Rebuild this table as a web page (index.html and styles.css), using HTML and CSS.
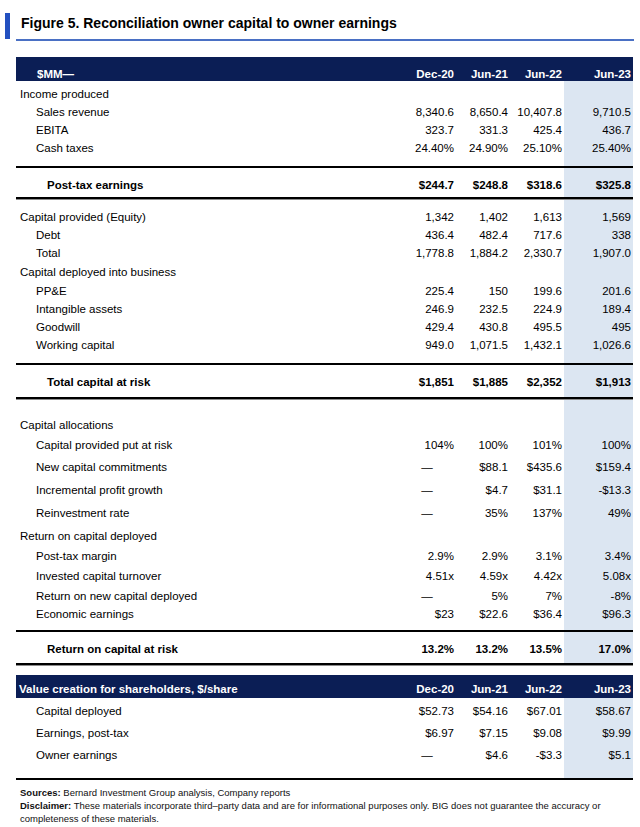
FILE: index.html
```html
<!DOCTYPE html>
<html lang="en">
<head>
<meta charset="utf-8">
<title>Figure 5. Reconciliation owner capital to owner earnings</title>
<link rel="stylesheet" href="styles.css">
</head>
<body>
<div class="page">
  <div class="title-row">
    <span class="title-mark"></span>
    <h1 class="title">Figure 5. Reconciliation owner capital to owner earnings</h1>
  </div>

  <div class="fig">
    <div class="row head">
      <div class="lbl hl">$MM—</div>
      <div class="v">Dec-20</div>
      <div class="v">Jun-21</div>
      <div class="v">Jun-22</div>
      <div class="v">Jun-23</div>
    </div>

    <div class="body body1">
      <div class="row h19"><div class="lbl">Income produced</div><div></div><div></div><div></div><div></div></div>
      <div class="row h18"><div class="lbl ind">Sales revenue</div><div class="v">8,340.6</div><div class="v">8,650.4</div><div class="v">10,407.8</div><div class="v">9,710.5</div></div>
      <div class="row h18"><div class="lbl ind">EBITA</div><div class="v">323.7</div><div class="v">331.3</div><div class="v">425.4</div><div class="v">436.7</div></div>
      <div class="row h18"><div class="lbl ind">Cash taxes</div><div class="v">24.40%</div><div class="v">24.90%</div><div class="v">25.10%</div><div class="v">25.40%</div></div>
      <div class="gap g9"></div>
      <div class="rule"></div>
      <div class="row tot tot-a"><div class="lbl sum">Post-tax earnings</div><div class="v">$244.7</div><div class="v">$248.8</div><div class="v">$318.6</div><div class="v">$325.8</div></div>
      <div class="rule dbl"></div>

      <div class="gap g8"></div>
      <div class="row h18"><div class="lbl">Capital provided (Equity)</div><div class="v">1,342</div><div class="v">1,402</div><div class="v">1,613</div><div class="v">1,569</div></div>
      <div class="row h18"><div class="lbl ind">Debt</div><div class="v">436.4</div><div class="v">482.4</div><div class="v">717.6</div><div class="v">338</div></div>
      <div class="row h18"><div class="lbl ind">Total</div><div class="v">1,778.8</div><div class="v">1,884.2</div><div class="v">2,330.7</div><div class="v">1,907.0</div></div>
      <div class="row h20"><div class="lbl">Capital deployed into business</div><div></div><div></div><div></div><div></div></div>
      <div class="row h18"><div class="lbl ind">PP&amp;E</div><div class="v">225.4</div><div class="v">150</div><div class="v">199.6</div><div class="v">201.6</div></div>
      <div class="row h18"><div class="lbl ind">Intangible assets</div><div class="v">246.9</div><div class="v">232.5</div><div class="v">224.9</div><div class="v">189.4</div></div>
      <div class="row h18"><div class="lbl ind">Goodwill</div><div class="v">429.4</div><div class="v">430.8</div><div class="v">495.5</div><div class="v">495</div></div>
      <div class="row h18"><div class="lbl ind">Working capital</div><div class="v">949.0</div><div class="v">1,071.5</div><div class="v">1,432.1</div><div class="v">1,026.6</div></div>
      <div class="gap g9"></div>
      <div class="rule"></div>
      <div class="row tot tot-b"><div class="lbl sum">Total capital at risk</div><div class="v">$1,851</div><div class="v">$1,885</div><div class="v">$2,352</div><div class="v">$1,913</div></div>
      <div class="rule dbl"></div>

      <div class="gap g16"></div>
      <div class="row h18"><div class="lbl">Capital allocations</div><div></div><div></div><div></div><div></div></div>
      <div class="row h21"><div class="lbl ind">Capital provided put at risk</div><div class="v">104%</div><div class="v">100%</div><div class="v">101%</div><div class="v">100%</div></div>
      <div class="row h23"><div class="lbl ind">New capital commitments</div><div class="v dash">—</div><div class="v">$88.1</div><div class="v">$435.6</div><div class="v">$159.4</div></div>
      <div class="row h23"><div class="lbl ind">Incremental profit growth</div><div class="v dash">—</div><div class="v">$4.7</div><div class="v">$31.1</div><div class="v">-$13.3</div></div>
      <div class="row h24"><div class="lbl ind">Reinvestment rate</div><div class="v dash">—</div><div class="v">35%</div><div class="v">137%</div><div class="v">49%</div></div>
      <div class="row h21"><div class="lbl">Return on capital deployed</div><div></div><div></div><div></div><div></div></div>
      <div class="row h20"><div class="lbl ind">Post-tax margin</div><div class="v">2.9%</div><div class="v">2.9%</div><div class="v">3.1%</div><div class="v">3.4%</div></div>
      <div class="row h20"><div class="lbl ind">Invested capital turnover</div><div class="v">4.51x</div><div class="v">4.59x</div><div class="v">4.42x</div><div class="v">5.08x</div></div>
      <div class="row h19"><div class="lbl ind">Return on new capital deployed</div><div class="v dash">—</div><div class="v">5%</div><div class="v">7%</div><div class="v">-8%</div></div>
      <div class="row h18"><div class="lbl ind">Economic earnings</div><div class="v">$23</div><div class="v">$22.6</div><div class="v">$36.4</div><div class="v">$96.3</div></div>
      <div class="gap g7"></div>
      <div class="rule"></div>
      <div class="row tot tot-c"><div class="lbl sum">Return on capital at risk</div><div class="v">13.2%</div><div class="v">13.2%</div><div class="v">13.5%</div><div class="v">17.0%</div></div>
      <div class="rule dbl"></div>
    </div>

    <div class="row head head2">
      <div class="lbl hl2">Value creation for shareholders, $/share</div>
      <div class="v">Dec-20</div>
      <div class="v">Jun-21</div>
      <div class="v">Jun-22</div>
      <div class="v">Jun-23</div>
    </div>

    <div class="body body2">
      <div class="row h22"><div class="lbl ind">Capital deployed</div><div class="v">$52.73</div><div class="v">$54.16</div><div class="v">$67.01</div><div class="v">$58.67</div></div>
      <div class="row h22"><div class="lbl ind">Earnings, post-tax</div><div class="v">$6.97</div><div class="v">$7.15</div><div class="v">$9.08</div><div class="v">$9.99</div></div>
      <div class="row h22"><div class="lbl ind">Owner earnings</div><div class="v dash">—</div><div class="v">$4.6</div><div class="v">-$3.3</div><div class="v">$5.1</div></div>
      <div class="gap g12"></div>
      <div class="rule"></div>
    </div>
  </div>

  <div class="notes">
    <p class="note"><b>Sources:</b> Bernard Investment Group analysis, Company reports</p>
    <p class="note"><b>Disclaimer:</b> These materials incorporate third–party data and are for informational purposes only. BIG does not guarantee the accuracy or<br>completeness of these materials.</p>
  </div>
</div>
</body>
</html>
```

FILE: styles.css
```css
* { box-sizing: border-box; }

html, body {
  margin: 0;
  padding: 0;
  background: #ffffff;
}

body {
  font-family: "Liberation Sans", Arial, sans-serif;
  color: #000;
}

.page {
  width: 640px;
  height: 827px;
  overflow: hidden;
}

/* ---------- title ---------- */
.title-row {
  display: flex;
  gap: 6px;
  padding: 13px 6px 0 5px;
}

.title-mark {
  flex: none;
  width: 5px;
  height: 26px;
  background: #2350c0;
}

.title {
  flex: 1;
  margin: 0;
  height: 28px;
  padding: 0 0 6px 5px;
  font-size: 14px;
  font-weight: bold;
  line-height: 20px;
  color: #000;
  border-bottom: 2px solid #4a70c4;
}

/* ---------- table ---------- */
.fig {
  width: 617px;
  margin: 16px 0 0 16px;
}

.row {
  display: grid;
  grid-template-columns: 384px 56px 54px 54px 69px;
  align-items: center;
  font-size: 11.5px;
  line-height: 14px;
  white-space: nowrap;
}

.row .v {
  text-align: right;
  padding-right: 2px;
}

.row .dash {
  text-align: center;
  padding-right: 2px;
}

.lbl { padding-left: 4px; }
.lbl.ind { padding-left: 20px; }
.lbl.sum { padding-left: 31px; }

.tot { font-weight: bold; }

.head {
  height: 24px;
  align-items: end;
  background: #0b1e55;
  color: #fff;
  font-weight: bold;
  line-height: 13px;
}

.head .lbl.hl { padding-left: 21px; }
.head .lbl.hl2 { padding-left: 3px; }

.head2 {
  height: 23px;
  margin-top: 9px;
  padding-bottom: 2px;
}

.body {
  background: linear-gradient(to right, transparent 548px, #dce6f2 548px);
}

.body1 { padding-top: 3px; }
.body2 { padding-top: 2px; }

.h18 { height: 18px; }
.h19 { height: 19px; }
.h20 { height: 20px; }
.h21 { height: 21px; }
.h22 { height: 22px; }
.h23 { height: 23px; }
.h24 { height: 24px; }

.tot-a { height: 29px; padding: 8px 0 3px; }
.tot-b { height: 32px; padding: 8px 0 6px; }
.tot-c { height: 31px; padding: 8px 0 5px; }

.gap { height: 0; }
.g7 { height: 7px; }
.g8 { height: 8px; }
.g9 { height: 9px; }
.g12 { height: 12px; }
.g16 { height: 16px; }

.rule {
  height: 2px;
  background: #000;
}

.rule.dbl {
  height: 3px;
  background: transparent;
  border-top: 2px solid #000;
  border-bottom: 1px solid #8c8c8c;
}

/* ---------- notes ---------- */
.notes {
  padding: 6px 0 0 20px;
}

.note {
  margin: 0;
  font-size: 9.5px;
  line-height: 13px;
  color: #111;
}

.note b { font-weight: bold; }
```
